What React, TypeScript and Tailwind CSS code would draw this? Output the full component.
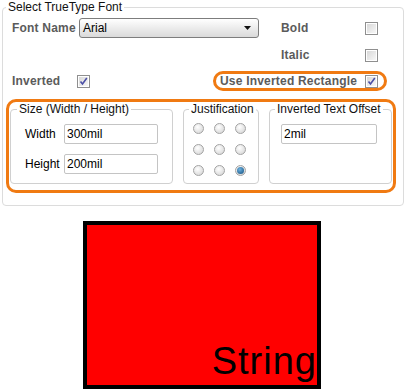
import React from "react";

const font = "font-['Liberation_Sans',Arial,sans-serif]";

const CheckBox = (props: { checked?: boolean }) => {
    return (
        <div className="w-[13px] h-[13px] border border-[#8f8f8f] bg-white p-[1px] shrink-0">
            <div className="w-full h-full bg-[linear-gradient(135deg,#d8d8d8,#f7f7f7)] flex items-center justify-center">
                {props.checked && (
                    <svg width="9" height="9" viewBox="0 0 9 9">
                        <path d="M1.5 4.5 L3.5 7 L7.8 1" fill="none" stroke="#4b4fa6" strokeWidth="1.6" />
                    </svg>
                )}
            </div>
        </div>
    )
}

const Radio = (props: { checked?: boolean }) => {
    return (
        <div className="w-[11px] h-[11px] rounded-full border border-[#a3a3a3] bg-[radial-gradient(circle_at_40%_35%,#ffffff,#d0d0d0)] flex items-center justify-center">
            {props.checked && (
                <div className="w-[7px] h-[7px] rounded-full bg-[radial-gradient(circle_at_40%_35%,#6fb2e0,#0f4d7d)]"></div>
            )}
        </div>
    )
}

const TextBox = (props: { value: string; width: string }) => {
    return (
        <div className={"h-[20px] border border-[#c4c4c4] rounded-[2px] bg-white pl-[2px] flex items-center text-[12px] text-black " + props.width}>
            {props.value}
        </div>
    )
}

const Label = (props: { text: string; width: string }) => {
    return <div className={"font-bold text-[12px] tracking-[0.2px] text-[#5b5b5b] " + props.width}>{props.text}</div>
}

export default function App() {
    return (
        <div className={"w-[406px] h-[391px] bg-white overflow-hidden pt-0 " + font}>
            <fieldset className="ml-[2px] w-[402px] h-[206px] border border-[#dcdcdc] rounded-[4px]">
                <legend className="ml-[3px] px-[2px] text-[12px] leading-[14px] text-[#111]">Select TrueType Font</legend>

                <div className="mt-[4px] h-[20px] flex items-center pl-[9px]">
                    <Label text="Font Name" width="w-[67px]" />
                    <div className="w-[180px] h-[20px] border border-[#7d7d7d] rounded-[3px] bg-[linear-gradient(#ffffff,#ececec_50%,#dadada)] flex items-center pl-[3px] pr-[7px] text-[12px] text-black">
                        <span className="flex-grow">Arial</span>
                        <svg width="7" height="4" viewBox="0 0 7 4"><path d="M0 0 H7 L3.5 4 Z" fill="#111" /></svg>
                    </div>
                    <div className="ml-[22px] w-[84px]"><Label text="Bold" width="" /></div>
                    <CheckBox />
                </div>

                <div className="mt-[7px] h-[20px] flex items-center pl-[278px]">
                    <Label text="Italic" width="w-[84px]" />
                    <CheckBox />
                </div>

                <div className="mt-[6px] h-[20px] flex items-center pl-[9px]">
                    <Label text="Inverted" width="w-[65px]" />
                    <CheckBox checked />
                    <div className="ml-[123px] w-[174px] h-[20px] border-[3px] border-[#f07a12] rounded-[10px] flex items-center pl-[4px]">
                        <Label text="Use Inverted Rectangle" width="w-[145px]" />
                        <CheckBox checked />
                    </div>
                </div>

                <div className="mt-[8px] ml-[3px] w-[390px] h-[94px] border-[3px] border-[#f07a12] rounded-[10px] flex">
                    <fieldset className="ml-[1px] w-[163px] h-[82px] border border-[#d0d0d0] rounded-[4px]">
                        <legend className="ml-[6px] px-[2px] text-[12px] leading-[14px] text-[#111]">Size (Width / Height)</legend>
                        <div className="mt-[8px] flex flex-col gap-[10px] pl-[14px]">
                            <div className="flex items-center">
                                <div className="w-[39px] text-[12px] text-black">Width</div>
                                <TextBox value="300mil" width="w-[94px]" />
                            </div>
                            <div className="flex items-center">
                                <div className="w-[39px] text-[12px] text-black">Height</div>
                                <TextBox value="200mil" width="w-[94px]" />
                            </div>
                        </div>
                    </fieldset>

                    <fieldset className="ml-[10px] w-[76px] h-[82px] border border-[#d0d0d0] rounded-[4px]">
                        <legend className="ml-[5px] px-[2px] text-[12px] leading-[14px] text-[#111]">Justification</legend>
                        <div className="mt-[7px] ml-[9px] grid grid-cols-[11px_11px_11px] gap-x-[10px] gap-y-[10px]">
                            <Radio /><Radio /><Radio />
                            <Radio /><Radio /><Radio />
                            <Radio /><Radio /><Radio checked />
                        </div>
                    </fieldset>

                    <fieldset className="ml-[10px] w-[123px] h-[82px] border border-[#d0d0d0] rounded-[4px]">
                        <legend className="ml-[5px] px-[2px] text-[12px] leading-[14px] text-[#111]">Inverted Text Offset</legend>
                        <div className="mt-[8px] pl-[11px]">
                            <TextBox value="2mil" width="w-[96px]" />
                        </div>
                    </fieldset>
                </div>
            </fieldset>

            <div className="mt-[15px] ml-[83px] w-[238px] h-[168px] border-[4px] border-black bg-[#ff0000] flex items-end justify-end">
                <div className="text-[38px] tracking-[1px] leading-none text-black pb-[5px]">String</div>
            </div>
        </div>
    )
}
